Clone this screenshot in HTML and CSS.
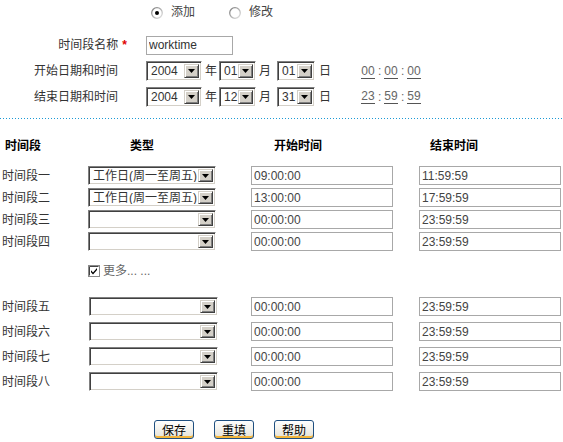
FILE: index.html
```html
<!DOCTYPE html>
<html lang="zh-CN">
<head>
<meta charset="utf-8">
<title>时间段设置</title>
<link rel="stylesheet" href="styles.css">
</head>
<body>
<form class="page">
  <div class="mode">
    <label class="radio-opt">
      <svg class="radio" width="12" height="12" viewBox="0 0 12 12"><defs><linearGradient id="rg" x1="0" y1="0" x2="1" y2="1"><stop offset="0" stop-color="#7a7a7a"/><stop offset="1" stop-color="#e6e6e6"/></linearGradient></defs><circle cx="6" cy="6" r="5.3" fill="#fff" stroke="url(#rg)" stroke-width="1.3"/><circle cx="6" cy="6" r="2" fill="#000"/></svg>
      <span>添加</span>
    </label>
    <label class="radio-opt">
      <svg class="radio" width="12" height="12" viewBox="0 0 12 12"><circle cx="6" cy="6" r="5.3" fill="#fff" stroke="url(#rg)" stroke-width="1.3"/></svg>
      <span>修改</span>
    </label>
  </div>

  <div class="head-form">
    <div class="lbl lbl-req">时间段名称<span class="req">*</span></div>
    <div class="fld"><input class="text name" type="text" value="worktime"></div>

    <div class="lbl">开始日期和时间</div>
    <div class="fld date">
      <div class="combo tall w-year"><span class="combo-val">2004</span><span class="combo-btn"><svg width="7" height="4" viewBox="0 0 7 4"><path d="M0 0h7L3.5 4z"/></svg></span></div>
      <span class="unit u-year">年</span>
      <div class="combo tall w-month"><span class="combo-val">01</span><span class="combo-btn"><svg width="7" height="4" viewBox="0 0 7 4"><path d="M0 0h7L3.5 4z"/></svg></span></div>
      <span class="unit u-month">月</span>
      <div class="combo tall w-day"><span class="combo-val">01</span><span class="combo-btn"><svg width="7" height="4" viewBox="0 0 7 4"><path d="M0 0h7L3.5 4z"/></svg></span></div>
      <span class="unit u-day">日</span>
      <div class="clock">
        <input class="tf" type="text" value="00"><span class="sep">:</span><input class="tf" type="text" value="00"><span class="sep">:</span><input class="tf" type="text" value="00">
      </div>
    </div>

    <div class="lbl">结束日期和时间</div>
    <div class="fld date">
      <div class="combo tall w-year"><span class="combo-val">2004</span><span class="combo-btn"><svg width="7" height="4" viewBox="0 0 7 4"><path d="M0 0h7L3.5 4z"/></svg></span></div>
      <span class="unit u-year">年</span>
      <div class="combo tall w-month"><span class="combo-val">12</span><span class="combo-btn"><svg width="7" height="4" viewBox="0 0 7 4"><path d="M0 0h7L3.5 4z"/></svg></span></div>
      <span class="unit u-month">月</span>
      <div class="combo tall w-day"><span class="combo-val">31</span><span class="combo-btn"><svg width="7" height="4" viewBox="0 0 7 4"><path d="M0 0h7L3.5 4z"/></svg></span></div>
      <span class="unit u-day">日</span>
      <div class="clock">
        <input class="tf" type="text" value="23"><span class="sep">:</span><input class="tf" type="text" value="59"><span class="sep">:</span><input class="tf" type="text" value="59">
      </div>
    </div>
  </div>

  <div class="divider"></div>

  <div class="grid-head">
    <div class="th th-name">时间段</div>
    <div class="th th-type">类型</div>
    <div class="th th-start">开始时间</div>
    <div class="th th-end">结束时间</div>
  </div>

  <div class="periods">
    <div class="pname">时间段一</div>
    <div class="combo w-type"><span class="combo-val">工作日(周一至周五)</span><span class="combo-btn"><svg width="7" height="4" viewBox="0 0 7 4"><path d="M0 0h7L3.5 4z"/></svg></span></div>
    <input class="text time" type="text" value="09:00:00">
    <input class="text time" type="text" value="11:59:59">

    <div class="pname">时间段二</div>
    <div class="combo w-type"><span class="combo-val">工作日(周一至周五)</span><span class="combo-btn"><svg width="7" height="4" viewBox="0 0 7 4"><path d="M0 0h7L3.5 4z"/></svg></span></div>
    <input class="text time" type="text" value="13:00:00">
    <input class="text time" type="text" value="17:59:59">

    <div class="pname">时间段三</div>
    <div class="combo w-type"><span class="combo-val"></span><span class="combo-btn"><svg width="7" height="4" viewBox="0 0 7 4"><path d="M0 0h7L3.5 4z"/></svg></span></div>
    <input class="text time" type="text" value="00:00:00">
    <input class="text time" type="text" value="23:59:59">

    <div class="pname">时间段四</div>
    <div class="combo w-type"><span class="combo-val"></span><span class="combo-btn"><svg width="7" height="4" viewBox="0 0 7 4"><path d="M0 0h7L3.5 4z"/></svg></span></div>
    <input class="text time" type="text" value="00:00:00">
    <input class="text time" type="text" value="23:59:59">
  </div>

  <label class="more">
    <svg class="check" width="12" height="12" viewBox="0 0 12 12"><rect x="0.5" y="0.5" width="11" height="11" fill="#fff" stroke="#8a8a8a"/><path d="M1.5 1.5h9" stroke="#444"/><path d="M1.5 1.5v9" stroke="#444"/><path d="M3 5.3l2 2.2 4-4.4v2l-4 4.4-2-2.2z" fill="#000"/></svg>
    <span>更多... ...</span>
  </label>

  <div class="periods periods-more">
    <div class="pname">时间段五</div>
    <div class="combo w-type2"><span class="combo-val"></span><span class="combo-btn"><svg width="7" height="4" viewBox="0 0 7 4"><path d="M0 0h7L3.5 4z"/></svg></span></div>
    <input class="text time" type="text" value="00:00:00">
    <input class="text time" type="text" value="23:59:59">

    <div class="pname">时间段六</div>
    <div class="combo w-type2"><span class="combo-val"></span><span class="combo-btn"><svg width="7" height="4" viewBox="0 0 7 4"><path d="M0 0h7L3.5 4z"/></svg></span></div>
    <input class="text time" type="text" value="00:00:00">
    <input class="text time" type="text" value="23:59:59">

    <div class="pname">时间段七</div>
    <div class="combo w-type2"><span class="combo-val"></span><span class="combo-btn"><svg width="7" height="4" viewBox="0 0 7 4"><path d="M0 0h7L3.5 4z"/></svg></span></div>
    <input class="text time" type="text" value="00:00:00">
    <input class="text time" type="text" value="23:59:59">

    <div class="pname">时间段八</div>
    <div class="combo w-type2"><span class="combo-val"></span><span class="combo-btn"><svg width="7" height="4" viewBox="0 0 7 4"><path d="M0 0h7L3.5 4z"/></svg></span></div>
    <input class="text time" type="text" value="00:00:00">
    <input class="text time" type="text" value="23:59:59">
  </div>

  <div class="actions">
    <button class="btn" type="button">保存</button>
    <button class="btn" type="button">重填</button>
    <button class="btn" type="button">帮助</button>
  </div>
</form>
</body>
</html>
```
FILE: styles.css
```css
html, body {
  margin: 0;
  padding: 0;
  background: #fff;
}

body {
  font-family: "Liberation Sans", "Noto Sans CJK SC", sans-serif;
  font-size: 12px;
  line-height: 14px;
  color: #333;
}

.page {
  margin: 0;
}

/* add / edit switch */
.mode {
  display: flex;
  align-items: center;
  height: 24px;
  padding-left: 151px;
}

.radio-opt {
  display: flex;
  align-items: center;
  gap: 8px;
  margin-right: 34px;
  color: #444;
}

.radio {
  display: block;
  margin-top: 2px;
}

/* name + date header form */
.head-form {
  display: grid;
  grid-template-columns: 146px 1fr;
  grid-template-rows: 26px 26px 25px;
  margin-top: 8px;
}

.lbl {
  align-self: center;
  text-align: right;
  padding-right: 28px;
  color: #333;
}

.lbl-req {
  padding-right: 19px;
}

.req {
  margin-left: 4px;
  color: #e00000;
  font-weight: bold;
}

.fld {
  display: flex;
  align-items: center;
}

.text {
  box-sizing: border-box;
  height: 19px;
  margin: 0;
  padding: 0 2px;
  border: 1px solid #a8a8a8;
  background: #fff;
  font: 12px "Liberation Sans", "Noto Sans CJK SC", sans-serif;
  color: #444;
  outline: none;
}

.name {
  width: 87px;
  color: #333;
}

/* classic sunken drop-down box */
.combo {
  box-sizing: border-box;
  display: flex;
  align-items: stretch;
  height: 19px;
  border: 1px solid;
  border-color: #808080 #fff #fff #808080;
  box-shadow: inset 1px 1px 0 #404040, inset -1px -1px 0 #d4d0c8;
  background: #fff;
  padding: 2px;
}

.combo.tall {
  height: 20px;
}

.combo-val {
  flex: 1;
  display: flex;
  align-items: center;
  padding-left: 2px;
  white-space: nowrap;
  overflow: hidden;
  color: #333;
}

.combo-btn {
  box-sizing: border-box;
  flex: none;
  width: 15px;
  display: flex;
  align-items: center;
  justify-content: center;
  background: #d4d0c8;
  border: 1px solid;
  border-color: #d4d0c8 #404040 #404040 #d4d0c8;
  box-shadow: inset 1px 1px 0 #fff, inset -1px -1px 0 #808080;
}

.w-year { width: 56px; }
.w-month { width: 37px; }
.w-day { width: 38px; }
.w-type { width: 128px; }
.w-type2 { width: 129px; margin-left: 1px; }

.unit {
  color: #333;
}

.u-year { margin: 0 2px 0 3px; }
.u-month { margin: 0 6px 0 3px; }
.u-day { margin: 0 30px 0 4px; }

/* hh : mm : ss */
.clock {
  display: flex;
  align-items: center;
}

.tf {
  box-sizing: border-box;
  width: 14px;
  height: 15px;
  margin: 0;
  padding: 0;
  border: 0;
  border-bottom: 1px solid #555;
  background: transparent;
  text-align: center;
  font: 12px "Liberation Sans", sans-serif;
  color: #666;
  outline: none;
}

.sep {
  width: 9px;
  text-align: center;
  color: #666;
}

/* dotted separator */
.divider {
  height: 1px;
  margin-top: 9px;
  background: repeating-linear-gradient(to right, #1a9ad6 0 1px, transparent 1px 3px);
}

/* period table */
.grid-head,
.periods {
  display: grid;
  grid-template-columns: 88px 163px 168px 1fr;
}

.grid-head {
  height: 20px;
  margin-top: 17px;
  align-items: center;
}

.th {
  font-weight: bold;
  color: #000;
}

.th-name { padding-left: 5px; }
.th-type { padding-left: 42px; }
.th-start { padding-left: 23px; }
.th-end { padding-left: 11px; }

.periods {
  grid-auto-rows: 19px;
  row-gap: 3px;
  margin-top: 10px;
}

.pname {
  align-self: center;
  padding-left: 2px;
  color: #333;
}

.time {
  width: 142px;
}

.more {
  display: flex;
  align-items: center;
  gap: 3px;
  height: 18px;
  margin-top: 11px;
  padding-left: 88px;
  color: #666;
}

.check {
  display: block;
}

.periods-more {
  row-gap: 6px;
  margin-top: 17px;
}

/* action buttons */
.actions {
  display: flex;
  gap: 20px;
  margin-top: 29px;
  padding-left: 154px;
}

.btn {
  box-sizing: border-box;
  width: 40px;
  height: 19px;
  margin: 0;
  padding: 0;
  border: 1px solid #1f4f80;
  border-radius: 3px;
  background: linear-gradient(#ffffff, #f4f3ee 45%, #e4e1d6);
  box-shadow: inset 0 -2px 0 #f3b63c;
  font: 12px "Noto Sans CJK SC", sans-serif;
  line-height: 15px;
  color: #000;
}
```
